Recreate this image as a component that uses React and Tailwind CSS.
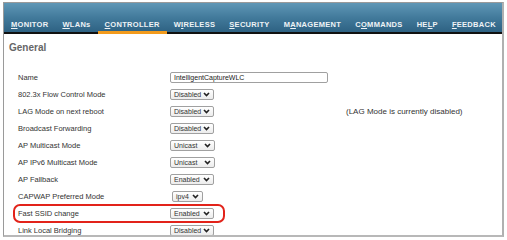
import React from "react";

const navItems = [
  { pre: "", key: "M", post: "ONITOR" },
  { pre: "", key: "W", post: "LANs" },
  { pre: "", key: "C", post: "ONTROLLER", active: true },
  { pre: "W", key: "I", post: "RELESS" },
  { pre: "", key: "S", post: "ECURITY" },
  { pre: "M", key: "A", post: "NAGEMENT" },
  { pre: "C", key: "O", post: "MMANDS" },
  { pre: "HE", key: "L", post: "P" },
  { pre: "", key: "F", post: "EEDBACK" },
];

const rows = [
  { label: "Name", input: "IntelligentCaptureWLC" },
  { label: "802.3x Flow Control Mode", select: "Disabled", w: "w-[44px]" },
  {
    label: "LAG Mode on next reboot",
    select: "Disabled",
    w: "w-[44px]",
    note: "(LAG Mode is currently disabled)",
  },
  { label: "Broadcast Forwarding", select: "Disabled", w: "w-[44px]" },
  { label: "AP Multicast Mode", select: "Unicast", w: "w-[45px]" },
  { label: "AP IPv6 Multicast Mode", select: "Unicast", w: "w-[45px]" },
  { label: "AP Fallback", select: "Enabled", w: "w-[44px]" },
  { label: "CAPWAP Preferred Mode", select: "ipv4", w: "w-[31px] ml-[2px]" },
  { label: "Fast SSID change", select: "Enabled", w: "w-[44px]" },
  { label: "Link Local Bridging", select: "Disabled", w: "w-[44px]" },
];

function Chevron() {
  return (
    <svg width="7" height="5" viewBox="0 0 7 5" className="shrink-0">
      <path d="M1 1 L3.5 3.6 L6 1" fill="none" stroke="#222" strokeWidth="1.6" />
    </svg>
  );
}

function Select({ value, w }) {
  return (
    <div
      className={`${w} h-[11px] flex items-center justify-between pl-[3px] pr-[3px] rounded-[2px] border border-[#a0a0a0] bg-gradient-to-b from-white to-[#ececec] text-[7px] leading-none text-[#333]`}
    >
      <span>{value}</span>
      <Chevron />
    </div>
  );
}

export default function App() {
  return (
    <div className="w-[507px] h-[240px] bg-white pt-[2px] pl-[3px] font-['Liberation_Sans',Arial,sans-serif]">
      <div className="w-[501px] h-[235px] border border-[#9a9a9a] border-r-2 border-r-[#b0b0b0] border-b-2 border-b-[#b8b8b8] relative overflow-hidden">
        {/* top nav */}
        <div className="h-[31px] bg-gradient-to-b from-[#5f97b6] via-[#427a9b] to-[#2e6283] border-b-[2px] border-b-[#111] flex items-end">
          {navItems.map((n, i) => (
            <div
              key={i}
              className={`px-[7px] pb-[3px] h-[14px] flex items-end text-[7.5px] font-bold leading-none tracking-[0.3px] text-[#eef3f6] mb-[-2px] border-b-[3px] ${
                n.active ? "border-b-[#f39b1c]" : "border-b-transparent"
              }`}
            >
              <span>
                {n.pre}
                <span className="underline">{n.key}</span>
                {n.post}
              </span>
            </div>
          ))}
        </div>

        {/* content */}
        <div className="pl-[5px] pt-[9px]">
          <h2 className="text-[10px] font-bold text-[#666] leading-none">General</h2>
        </div>

        <div className="mt-[16px] pl-[14px]">
          {rows.map((r, i) => (
            <div key={i} className="h-[17px] grid grid-cols-[152px_176px_auto] items-center text-[7.5px] text-[#333]">
              <span>{r.label}</span>
              <div>
                {r.input ? (
                  <div className="w-[158px] h-[11px] flex items-center px-[3px] rounded-[2px] border border-[#a0a0a0] bg-white text-[7px] leading-none text-[#222]">
                    {r.input}
                  </div>
                ) : (
                  <Select value={r.select} w={r.w} />
                )}
              </div>
              <span className="text-[8px]">{r.note}</span>
            </div>
          ))}
        </div>

        {/* highlight annotation */}
        <div className="absolute left-[9px] top-[201px] w-[212px] h-[19px] rounded-[7px] border-2 border-[#e2231a]" />
      </div>
    </div>
  );
}
